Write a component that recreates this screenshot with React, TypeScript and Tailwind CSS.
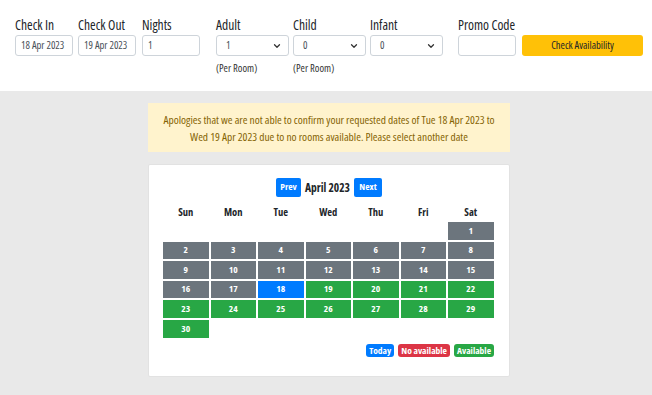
import React from 'react';
import { ChevronDown } from 'lucide-react';

const DAYS = ['Sun', 'Mon', 'Tue', 'Wed', 'Thu', 'Fri', 'Sat'];

// April 2023 starts on Saturday; 18 is today, 19+ available
const cellClass = (d: number) => {
  if (d === 18) return 'bg-[#007bff]';
  if (d > 18) return 'bg-[#28a745]';
  return 'bg-[#6c757d]';
};

const TextBox: React.FC<{ label: string; value: string }> = ({ label, value }) => (
  <div className="flex flex-col w-[58px]">
    <label className="text-[13.5px] leading-[16px] text-[#212529] mb-[2px] whitespace-nowrap">{label}</label>
    <div className="w-[58px] h-[21px] border border-[#ced4da] rounded-[3px] bg-white px-[5px] flex items-center text-[10.5px] text-[#495057] whitespace-nowrap">
      {value}
    </div>
  </div>
);

const SelectBox: React.FC<{ label: string; value: string; note?: string }> = ({ label, value, note }) => (
  <div className="flex flex-col w-[73px]">
    <label className="text-[13.5px] leading-[16px] text-[#212529] mb-[2px]">{label}</label>
    <div className="w-[73px] h-[21px] border border-[#ced4da] rounded-[3px] bg-white pl-[9px] pr-[6px] flex items-center justify-between text-[10.5px] text-[#495057]">
      <span>{value}</span>
      <ChevronDown size={10} strokeWidth={3} className="text-[#333]" />
    </div>
    {note && <span className="text-[10.5px] text-[#333] mt-[6px] leading-[12px] whitespace-nowrap">{note}</span>}
  </div>
);

export default function App() {
  const cells: (number | null)[] = [null, null, null, null, null, null];
  for (let i = 1; i <= 30; i++) cells.push(i);

  return (
    <div className="w-[652px] h-[395px] bg-[#e9e9e9] overflow-hidden font-['Open_Sans',sans-serif] font-stretch-condensed">
      {/* Search bar */}
      <div className="h-[91px] bg-white pt-[17px] pl-[15px] flex items-start">
        <div className="flex gap-[5px]">
          <TextBox label="Check In" value="18 Apr 2023" />
          <TextBox label="Check Out" value="19 Apr 2023" />
          <div className="ml-[1px]">
            <TextBox label="Nights" value="1" />
          </div>
        </div>
        <div className="flex gap-[4px] ml-[16px]">
          <SelectBox label="Adult" value="1" note="(Per Room)" />
          <SelectBox label="Child" value="0" note="(Per Room)" />
          <SelectBox label="Infant" value="0" />
        </div>
        <div className="ml-[15px]">
          <TextBox label="Promo Code" value="" />
        </div>
        <button className="ml-[6px] mt-[18px] w-[121px] h-[21px] rounded-[3px] bg-[#ffc107] text-[10.5px] text-[#212529] flex items-center justify-center">
          Check Availability
        </button>
      </div>

      {/* Content */}
      <div className="w-[362px] ml-[148px] pt-[12px]">
        <div className="h-[49px] bg-[#fff3cd] text-[#856404] text-[11.4px] leading-[17px] flex flex-col items-center justify-center text-center whitespace-nowrap">
          <p>Apologies that we are not able to confirm your requested dates of Tue 18 Apr 2023 to</p>
          <p>Wed 19 Apr 2023 due to no rooms available. Please select another date</p>
        </div>

        <div className="mt-[12px] h-[213px] bg-white border border-[#e2e2e2] rounded-[2px] pt-[13px] px-[14px]">
          <div className="flex items-center justify-center gap-[4px]">
            <button className="h-[19px] w-[25px] rounded-[2px] bg-[#007bff] text-white text-[9.5px] font-bold">Prev</button>
            <span className="text-[11.5px] font-bold text-[#212529]">April 2023</span>
            <button className="h-[19px] w-[28px] rounded-[2px] bg-[#007bff] text-white text-[9.5px] font-bold">Next</button>
          </div>

          <div className="grid grid-cols-[repeat(7,45.5px)] gap-x-[2px] mt-[6px]">
            {DAYS.map((d) => (
              <div key={d} className="h-[18px] text-center text-[10.5px] font-bold text-[#212529] leading-[18px]">
                {d}
              </div>
            ))}
          </div>

          <div className="grid grid-cols-[repeat(7,45.5px)] gap-[2px] mt-[1px]">
            {cells.map((d, i) =>
              d === null ? (
                <div key={i} className="h-[17.6px]" />
              ) : (
                <div
                  key={i}
                  className={`h-[17.6px] ${cellClass(d)} text-white text-[9.5px] font-bold flex items-center justify-center`}
                >
                  {d}
                </div>
              )
            )}
          </div>

          <div className="flex justify-end gap-[4px] mt-[6px] pr-[1px]">
            <span className="h-[13px] px-[3px] rounded-[3px] bg-[#007bff] text-white text-[9.5px] font-bold leading-[13px]">Today</span>
            <span className="h-[13px] px-[3px] rounded-[3px] bg-[#dc3545] text-white text-[9.5px] font-bold leading-[13px]">No available</span>
            <span className="h-[13px] px-[3px] rounded-[3px] bg-[#28a745] text-white text-[9.5px] font-bold leading-[13px]">Available</span>
          </div>
        </div>
      </div>
    </div>
  );
}
